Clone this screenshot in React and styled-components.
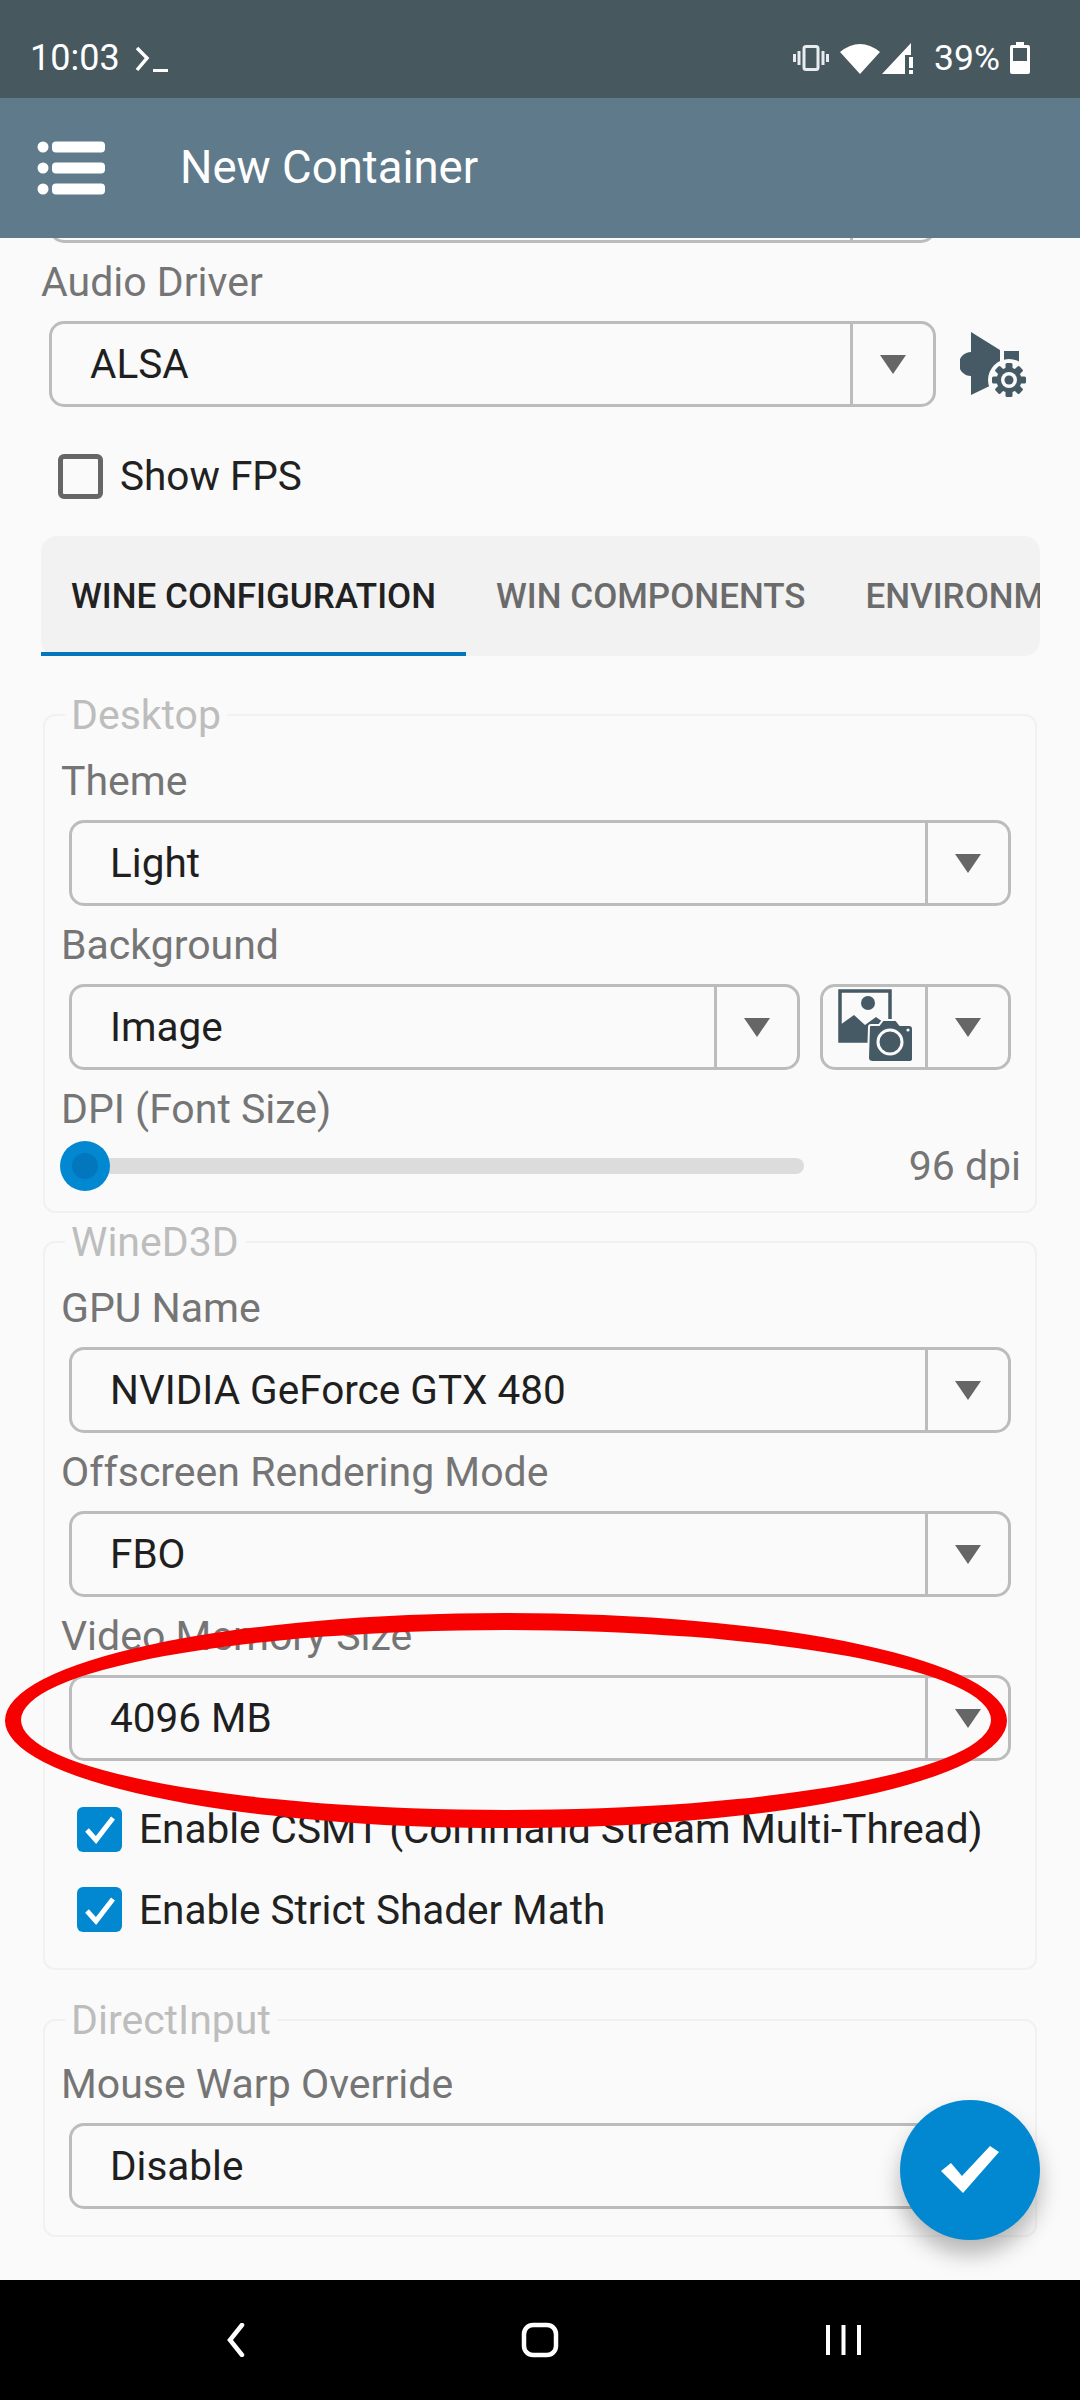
import React from "react";
import styled, { createGlobalStyle } from "styled-components";

const Global = createGlobalStyle`
  html, body { margin: 0; padding: 0; background: #fafafa; }
  * { box-sizing: border-box; }
`;
const Phone = styled.div`
  position: relative; width: 1080px; height: 2400px; overflow: hidden;
  display: flex; flex-direction: column; background: #fafafa;
  font-family: Roboto, "Liberation Sans", sans-serif;
`;
const StatusBar = styled.div`
  height: 98px; flex: none; background: #47585f; color: #fff;
  display: flex; align-items: center; padding: 18px 50px 0 30px; font-size: 36px;
`;
const StatusRight = styled.div`margin-left: auto; display: flex; align-items: center;`;
const Toolbar = styled.div`
  height: 140px; flex: none; background: #5f7a8b; color: #fff;
  display: flex; align-items: center; padding: 0 0 0 37px; z-index: 1;
`;
const Title = styled.div`font-size: 45.5px; margin-left: 73px; padding-bottom: 2px;`;
const Scroll = styled.div`flex: 1; overflow: hidden; min-height: 0;`;
const Form = styled.div`margin-top: -81px; padding: 0 40px 0 41px;`;
const Label = styled.div`
  height: 78px; display: flex; align-items: center; font-size: 41px; color: #757575;
  margin-left: ${p => p.$shift || 0}px; white-space: nowrap;
`;
const Row = styled.div`display: flex; align-items: center; margin-left: ${p => p.$indent || 0}px;`;
const Spinner = styled.div`
  display: flex; align-items: stretch; height: 86px; flex: ${p => (p.$width ? "none" : 1)};
  width: ${p => (p.$width ? `${p.$width}px` : "auto")};
  margin-left: ${p => p.$gap || 0}px;
  border: 3px solid #bcbcbc; border-radius: 15px; color: #1f1f1f; font-size: 40.5px; background: #fafafa;
`;
const SpinnerValue = styled.div`
  flex: 1; display: flex; align-items: center; padding-left: 38px; border-right: 3px solid #bcbcbc;
`;
const SpinnerArrow = styled.div`
  width: 80px; flex: none; display: flex; align-items: center; justify-content: center;
  &::after {
    content: ""; border-left: 13px solid transparent; border-right: 13px solid transparent;
    border-top: 19px solid #666;
  }
`;
const CheckRow = styled.div`
  display: flex; align-items: center; height: ${p => p.$height}px; font-size: 40.5px; color: #212121;
  margin: ${p => p.$margin || "0"}; white-space: nowrap;
`;
const Box = styled.div`
  width: 45px; height: 45px; flex: none; border-radius: 6px; margin-right: ${p => p.$gap}px;
  border: ${p => (p.$on ? "none" : "5px solid #666")}; background: ${p => (p.$on ? "#0288d1" : "transparent")};
  display: flex; align-items: center; justify-content: center;
`;
const Tabs = styled.div`
  height: 120px; width: 999px; background: #f2f2f2; border-radius: 16px; margin-top: 30px;
`;
const TabStrip = styled.div`display: flex; height: 120px; overflow: hidden; white-space: nowrap;`;
const Tab = styled.div`
  flex: none; padding: 5px 30px 0; height: 120px; display: flex; align-items: center;
  font-size: 35px; font-weight: 500; color: ${p => (p.$active ? "#212121" : "#6b6b6b")};
  border-bottom: 4px solid ${p => (p.$active ? "#0277bd" : "transparent")};
`;
const Frame = styled.div`
  position: relative; width: 994px; margin: ${p => p.$top}px 0 0 2px;
  border: 2px solid #f1f1f1; border-radius: 12px; padding: ${p => p.$pad}px 24px ${p => p.$bottom}px;
`;
const Legend = styled.div`
  position: absolute; top: -24px; left: 20px; padding: 0 6px; height: 48px; line-height: 46px;
  background: #fafafa; color: #bdbdbd; font-size: 41px;
`;
const SliderRow = styled.div`display: flex; align-items: center; height: 36px; margin-left: -8px;`;
const Track = styled.div`
  position: relative; width: 719px; height: 16px; margin-left: 24px; border-radius: 8px; background: #dcdcdc;
`;
const Thumb = styled.div`
  position: absolute; left: -25px; top: -17px; width: 50px; height: 50px; border-radius: 50%;
  background: #0288d1; display: flex; align-items: center; justify-content: center;
  &::after { content: ""; width: 26px; height: 26px; border-radius: 50%; background: #0277bd; }
`;
const SliderValue = styled.div`margin-left: auto; margin-right: -10px; font-size: 41px; color: #757575;`;
const Fab = styled.div`
  position: absolute; right: 40px; bottom: 160px; width: 140px; height: 140px; border-radius: 50%;
  background: #0288d1; box-shadow: 0 14px 22px rgba(0,0,0,.28);
  display: flex; align-items: center; justify-content: center;
`;
const NavBar = styled.div`
  height: 120px; flex: none; background: #000; display: flex; align-items: center; justify-content: center;
  gap: 265px;
`;
const NavSlot = styled.div`width: 40px; height: 40px; display: flex; align-items: center; justify-content: center;`;
const Annotation = styled.svg`position: absolute; left: 0; top: 1600px; pointer-events: none;`;
const IconButton = styled.div`margin-left: 24px; width: 70px; height: 70px; flex: none; display: flex;`;
const ImageButton = styled.div`flex: 1; display: flex; align-items: center; padding-left: 15px; border-right: 3px solid #bcbcbc;`;
const Prompt = styled.svg`margin-left: 15px; margin-top: 4px;`;
const Pct = styled.span`margin: 0 10px 0 18px; font-size: 35.5px;`;
const WifiIcon = styled.svg`margin-left: 11px;`;
const SignalIcon = styled.svg`margin-left: 2px;`;

const Drop = ({ value, width }) => (
  <Spinner $width={width}>
    <SpinnerValue>{value}</SpinnerValue>
    <SpinnerArrow />
  </Spinner>
);
const Tick = () => (
  <svg width="36" height="32" viewBox="0 0 36 32"><path d="M5 17 L14 27 L31 5" fill="none" stroke="#fff" strokeWidth="5" /></svg>
);

export default function App() {
  return (
    <Phone>
      <Global />
      <StatusBar>
        <span>10:03</span>
        <Prompt width="34" height="28" viewBox="0 0 34 28"><path d="M2 2 L12 12 L2 24" fill="none" stroke="#fff" strokeWidth="3.5" /><rect x="18" y="23" width="15" height="3" fill="#fff" /></Prompt>
        <StatusRight>
          <svg width="36" height="26" viewBox="0 0 36 26" fill="none" stroke="#e8ecee">
            <rect x="11" y="1.5" width="14" height="23" rx="2" strokeWidth="3" />
            <path d="M6 6 V20 M1.5 9 V17 M30 6 V20 M34.5 9 V17" strokeWidth="3" />
          </svg>
          <WifiIcon width="40" height="32" viewBox="0 0 40 32"><path d="M0 10 Q20 -6 40 10 L20 32 Z" fill="#fff" /></WifiIcon>
          <SignalIcon width="34" height="34" viewBox="0 0 34 34">
            <path d="M0 33 L29 2 V14 H23 V33 Z" fill="#fff" />
            <rect x="27" y="16" width="4" height="11" fill="#fff" /><rect x="27" y="29" width="4" height="4" fill="#fff" />
          </SignalIcon>
          <Pct>39%</Pct>
          <svg width="20" height="32" viewBox="0 0 20 32"><path d="M6 0 H14 V3 H18 Q20 3 20 5 V30 Q20 32 18 32 H2 Q0 32 0 30 V5 Q0 3 2 3 H6 Z" fill="#fff" /><rect x="3" y="6" width="14" height="13" fill="#47585f" /></svg>
        </StatusRight>
      </StatusBar>
      <Toolbar>
        <svg width="70" height="54" viewBox="0 0 70 54" fill="#fff">
          <circle cx="6" cy="6" r="5.5" /><circle cx="6" cy="27" r="5.5" /><circle cx="6" cy="48" r="5.5" />
          <rect x="15" y="0.5" width="53" height="11" rx="4" /><rect x="15" y="21.5" width="53" height="11" rx="4" /><rect x="15" y="42.5" width="53" height="11" rx="4" />
        </svg>
        <Title>New Container</Title>
      </Toolbar>
      <Scroll>
        <Form>
          <Row $indent={8}><Drop value="" width={887} /></Row>
          <Label>Audio Driver</Label>
          <Row $indent={8}>
            <Drop value="ALSA" width={887} />
            <IconButton>
              <svg width="70" height="70" viewBox="0 0 70 70" fill="#455a64">
                <path d="M11 23 A12 12 0 0 0 11 47 Z" />
                <path d="M11 3 L40 21 V52 L11 66 Z" />
                <path d="M44 22 H59 V45 H44 Z" />
                <g transform="translate(49 51)">
                  <circle r="21" fill="#fafafa" />
                  {[0, 45, 90, 135, 180, 225, 270, 315].map(a => (
                    <rect key={a} x="-3.5" y="-17" width="7" height="8" rx="1.5" transform={`rotate(${a})`} />
                  ))}
                  <circle r="12.5" /><circle r="8" fill="#fafafa" /><circle r="4.5" />
                </g>
              </svg>
            </IconButton>
          </Row>
          <CheckRow $height={60} $margin="39px 0 0 17px">
            <Box $gap={17} />Show FPS
          </CheckRow>
          <Tabs>
            <TabStrip>
              <Tab $active>WINE CONFIGURATION</Tab>
              <Tab>WIN COMPONENTS</Tab>
              <Tab>ENVIRONMENT</Tab>
            </TabStrip>
          </Tabs>
          <Frame $top={58} $pad={26} $bottom={27}>
            <Legend>Desktop</Legend>
            <Label $shift={-8}>Theme</Label>
            <Drop value="Light" />
            <Label $shift={-8}>Background</Label>
            <Row>
              <Drop value="Image" width={731} />
              <Spinner $width={191} $gap={20}>
                <ImageButton>
                  <svg width="76" height="76" viewBox="0 0 76 76">
                    <rect x="2" y="2" width="50" height="50" fill="none" stroke="#455a64" strokeWidth="3.5" />
                    <circle cx="30" cy="14" r="7" fill="#455a64" />
                    <path d="M2 36 L16 26 L27 36 L38 28 L52 38 V52 H2 Z" fill="#455a64" />
                    <path d="M31 38 Q31 36 33 36 H41 L45 31 H58 L62 36 H71 Q75 36 75 40 V70 Q75 73 71 73 H35 Q30 73 30 69 Z" fill="#455a64" stroke="#fafafa" strokeWidth="2" />
                    <circle cx="52" cy="53" r="12" fill="none" stroke="#fafafa" strokeWidth="3" />
                    <circle cx="70" cy="41" r="1.6" fill="#fafafa" />
                  </svg>
                </ImageButton>
                <SpinnerArrow />
              </Spinner>
            </Row>
            <Label $shift={-8}>DPI (Font Size)</Label>
            <SliderRow>
              <Track><Thumb /></Track>
              <SliderValue>96 dpi</SliderValue>
            </SliderRow>
          </Frame>
          <Frame $top={28} $pad={26} $bottom={18}>
            <Legend>WineD3D</Legend>
            <Label $shift={-8}>GPU Name</Label>
            <Drop value="NVIDIA GeForce GTX 480" />
            <Label $shift={-8}>Offscreen Rendering Mode</Label>
            <Drop value="FBO" />
            <Label $shift={-8}>Video Memory Size</Label>
            <Drop value="4096 MB" />
            <CheckRow $height={80} $margin="28px 0 0 8px"><Box $on $gap={17}><Tick /></Box>Enable CSMT (Command Stream Multi-Thread)</CheckRow>
            <CheckRow $height={81} $margin="0 0 0 8px"><Box $on $gap={17}><Tick /></Box>Enable Strict Shader Math</CheckRow>
          </Frame>
          <Frame $top={49} $pad={24} $bottom={26}>
            <Legend>DirectInput</Legend>
            <Label $shift={-8}>Mouse Warp Override</Label>
            <Drop value="Disable" />
          </Frame>
        </Form>
      </Scroll>
      <Fab>
        <svg width="62" height="48" viewBox="0 0 62 48"><path d="M2 25 L12 17 L23 30 L51 0 L60 6 L24 47 Z" fill="#fff" /></svg>
      </Fab>
      <NavBar>
        <NavSlot>
          <svg width="22" height="34" viewBox="0 0 22 34"><path d="M18 2 L6 17 L18 32" fill="none" stroke="#fff" strokeWidth="4.5" strokeLinecap="round" /></svg>
        </NavSlot>
        <NavSlot>
          <svg width="38" height="36" viewBox="0 0 38 36"><rect x="3" y="3" width="32" height="30" rx="9" fill="none" stroke="#fff" strokeWidth="4.5" /></svg>
        </NavSlot>
        <NavSlot>
          <svg width="38" height="32" viewBox="0 0 38 32" fill="#fff"><rect x="0" y="1" width="4" height="30" /><rect x="15.5" y="1" width="4" height="30" /><rect x="31" y="1" width="4" height="30" /></svg>
        </NavSlot>
      </NavBar>
      <Annotation width="1080" height="240" viewBox="0 1600 1080 240">
        <path fillRule="evenodd" fill="#f60000" d="M5 1720.5 A501 107.5 0 1 0 1007 1720.5 A501 107.5 0 1 0 5 1720.5 Z M21 1720 A485 90 0 1 1 991 1720 A485 90 0 1 1 21 1720 Z" />
      </Annotation>
    </Phone>
  );
}
